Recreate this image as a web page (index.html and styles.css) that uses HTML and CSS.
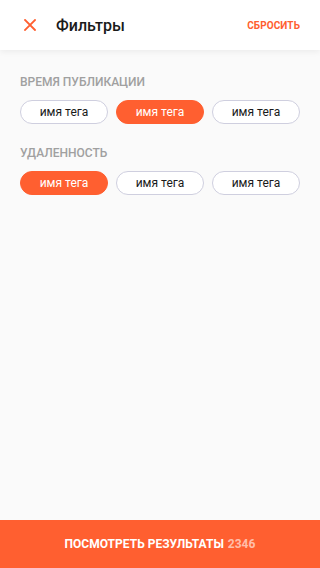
FILE: index.html
```html
<!DOCTYPE html>
<html lang="ru">
<head>
<meta charset="utf-8">
<link rel="stylesheet" href="styles.css">
</head>
<body>
<div class="screen">
  <header class="header">
    <button class="close" aria-label="Закрыть">
      <svg width="12" height="12" viewBox="0 0 12 12"><path d="M1 1L11 11M11 1L1 11" stroke="#ff5f30" stroke-width="1.8" stroke-linecap="square" fill="none"/></svg>
    </button>
    <h1 class="title">Фильтры</h1>
    <span class="reset">СБРОСИТЬ</span>
  </header>
  <main class="content">
    <section class="group">
      <div class="label">ВРЕМЯ ПУБЛИКАЦИИ</div>
      <div class="chips">
        <span class="chip">имя тега</span>
        <span class="chip active">имя тега</span>
        <span class="chip">имя тега</span>
      </div>
    </section>
    <section class="group">
      <div class="label">УДАЛЕННОСТЬ</div>
      <div class="chips">
        <span class="chip active">имя тега</span>
        <span class="chip">имя тега</span>
        <span class="chip">имя тега</span>
      </div>
    </section>
  </main>
  <footer class="cta">ПОСМОТРЕТЬ РЕЗУЛЬТАТЫ <span class="count">2346</span></footer>
</div>
</body>
</html>
```
FILE: styles.css
```css
* { box-sizing: border-box; }
html, body { margin: 0; padding: 0; }
body {
  font-family: Roboto, "Noto Sans", sans-serif;
  background: #fafafa;
}
.screen {
  width: 320px;
  height: 568px;
  display: flex;
  flex-direction: column;
  background: #fafafa;
}
.header {
  height: 50px;
  background: #fff;
  display: flex;
  align-items: center;
  padding: 0 20px 0 24px;
  box-shadow: 0 2px 6px rgba(0,0,0,0.06);
  position: relative;
  z-index: 1;
}
.close {
  border: 0;
  background: none;
  padding: 0;
  width: 12px;
  height: 12px;
  display: flex;
}
.title {
  margin: 0 0 0 20px;
  font-size: 16px;
  font-weight: 500;
  color: #1a1a1a;
  flex: 1;
}
.reset {
  font-size: 10px;
  font-weight: 700;
  color: #ff5f30;
  letter-spacing: 0.1px;
}
.content {
  flex: 1;
  padding: 25px 20px 0;
  display: flex;
  flex-direction: column;
  gap: 22px;
}
.label {
  font-size: 12px;
  font-weight: 500;
  color: #a0a0a0;
  line-height: 14px;
  margin-bottom: 11px;
}
.chips {
  display: flex;
  gap: 8px;
}
.chip {
  width: 88px;
  height: 24px;
  border-radius: 12px;
  border: 1px solid #cfcfdf;
  background: #fff;
  display: flex;
  align-items: center;
  justify-content: center;
  font-size: 12px;
  color: #1a1a1a;
}
.chip.active {
  background: #ff5f30;
  border-color: #ff5f30;
  color: #fff;
}
.cta {
  height: 48px;
  background: #ff5f30;
  color: #fff;
  display: flex;
  align-items: center;
  justify-content: center;
  font-size: 12px;
  font-weight: 700;
  gap: 4px;
}
.count { color: rgba(255,255,255,0.6); }
```
